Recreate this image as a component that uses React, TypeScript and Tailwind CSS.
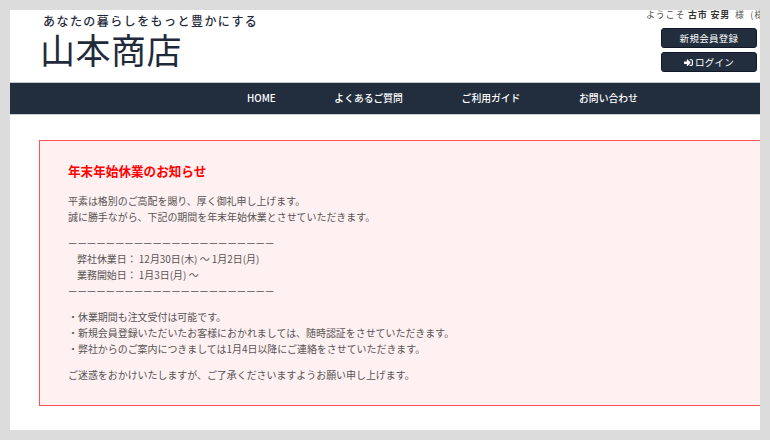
import { FaSignInAlt } from "react-icons/fa";

const jp = "font-['Noto_Sans_CJK_JP','Noto_Sans',sans-serif]";

const navItems = ["HOME", "よくあるご質問", "ご利用ガイド", "お問い合わせ"];

export default function App() {
    return (
        <div className={`w-[770px] h-[440px] bg-[#dcdcdc] p-[10px] overflow-hidden ${jp}`}>
            <div className="w-[750px] h-[420px] bg-white overflow-hidden">

                {/* ヘッダー */}
                <header className="h-[72px] flex">
                    <div className="w-[651px] pl-[30px] text-[#1f2b3c]">
                        <p className="pl-[3px] pt-[3px] text-[12px] leading-[16px] tracking-[1.45px] font-medium">あなたの暮らしをもっと豊かにする</p>
                        <h1 className="text-[35px] leading-[44px] -mt-[2px] tracking-[0.5px] font-normal whitespace-nowrap">山本商店</h1>
                    </div>
                    <div className="flex-1 min-w-0">
                        <p className="h-[18px] -ml-[15px] -mt-[5px] mb-[5px] text-[9px] leading-[20px] tracking-[0.8px] text-[#555] whitespace-nowrap">
                            ようこそ <span className="font-bold text-[#333]">古市 安男</span> <span className="ml-[2px]">様 &nbsp;(様</span>
                        </p>
                        <button className="block w-[96px] h-[20px] mb-[4px] bg-[#222e3e] border border-[#111827] rounded-[3px] text-white text-[9.5px] leading-[18px] tracking-[0.3px]">新規会員登録</button>
                        <button className="flex items-center justify-center gap-[2px] w-[96px] h-[20px] bg-[#222e3e] border border-[#111827] rounded-[3px] text-white text-[9.5px] leading-[18px] tracking-[0.3px]">
                            <FaSignInAlt className="w-[9px] h-[9px]" />
                            ログイン
                        </button>
                    </div>
                </header>

                {/* ナビ */}
                <nav className="h-[33px] bg-[#222e3e] border-t border-t-[#c4c8ce] border-b border-b-[#c9ced4] flex items-center gap-[58.7px] pl-[237px] text-white text-[9.8px] font-medium">
                    {navItems.map((item) => (
                        <a key={item} className="whitespace-nowrap">{item}</a>
                    ))}
                </nav>

                {/* お知らせ */}
                <div className="pt-[25px] pl-[29px]">
                    <section className="w-[800px] h-[266px] bg-[#fff0f1] border border-[#ff5055] pl-[28px] pt-[22px] text-[9.95px] leading-[16px] text-[#555] whitespace-nowrap">
                        <h2 className="text-[12.6px] leading-[16px] font-bold text-[#ff0000] mb-[14px]">年末年始休業のお知らせ</h2>
                        <p>平素は格別のご高配を賜り、厚く御礼申し上げます。</p>
                        <p className="mb-[10px]">誠に勝手ながら、下記の期間を年末年始休業とさせていただきます。</p>
                        <p className="text-[9.4px]">ーーーーーーーーーーーーーーーーーーーーーー</p>
                        <p className="pl-[9px]">弊社休業日： 12月30日(木) ～ 1月2日(月)</p>
                        <p className="pl-[9px]">業務開始日： 1月3日(月) ～</p>
                        <p className="mb-[10px] text-[9.4px]">ーーーーーーーーーーーーーーーーーーーーーー</p>
                        <p>・休業期間も注文受付は可能です。</p>
                        <p>・新規会員登録いただいたお客様におかれましては、随時認証をさせていただきます。</p>
                        <p className="mb-[10px]">・弊社からのご案内につきましては1月4日以降にご連絡をさせていただきます。</p>
                        <p>ご迷惑をおかけいたしますが、ご了承くださいますようお願い申し上げます。</p>
                    </section>
                </div>

            </div>
        </div>
    );
}
